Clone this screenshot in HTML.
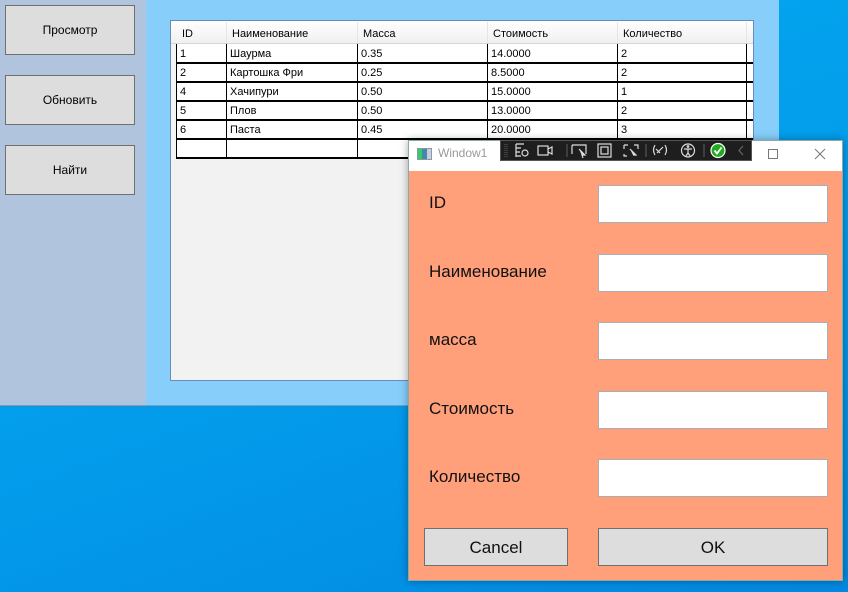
<!DOCTYPE html>
<html><head><meta charset="utf-8"><style>
*{margin:0;padding:0;box-sizing:border-box}
body{width:848px;height:592px;overflow:hidden;position:relative;font-family:"Liberation Sans",sans-serif;background:linear-gradient(160deg,#03aef2 0%,#0399ea 60%,#0288e0 100%)}
.a{position:absolute}
.btn{position:absolute;background:#dddddd;border:1px solid #707070;display:flex;align-items:center;justify-content:center;font-size:12px;color:#000}
.c{position:absolute;font-size:11px;color:#000;white-space:nowrap;line-height:19px;padding-left:3px;margin-top:1px}
.hl{position:absolute;height:2px;background:#000;left:176px;width:577px}
.vl{position:absolute;width:1px;background:#000}
.lbl{position:absolute;left:429px;font-size:17px;color:#111;margin-top:1px}
.tb{position:absolute;left:598px;width:230px;background:#fff;border:1px solid #abadb3}
.dbtn{position:absolute;background:#dddddd;border:1px solid #707070;display:flex;align-items:center;justify-content:center;font-size:17px;color:#111;padding-top:2px}
</style></head><body>
<div class="a" style="left:0;top:0;width:146px;height:406px;background:#b0c4de"></div>
<div class="a" style="left:146px;top:0;width:633px;height:406px;background:#87cefa"></div>
<div class="a" style="left:0;top:405px;width:779px;height:2px;background:#3a7fb8;opacity:.5"></div>
<div class="btn" style="left:5px;top:5px;width:130px;height:50px">Просмотр</div>
<div class="btn" style="left:5px;top:75px;width:130px;height:50px">Обновить</div>
<div class="btn" style="left:5px;top:145px;width:130px;height:50px">Найти</div>

<div class="a" style="left:170px;top:20px;width:584px;height:361px;background:#f2f2f2;border:1px solid #6a8cba"></div>
<div class="a" style="left:171px;top:21px;width:582px;height:23px;background:linear-gradient(#fff,#f0f0f0);border-bottom:1px solid #d5d5d5"></div>
<div class="a" style="left:176px;top:44px;width:577px;height:115px;background:#fff"></div>
<div class="a" style="left:171px;top:44px;width:5px;height:115px;background:#f4f4f4"></div>
<div class="c" style="left:179px;top:24px">ID</div>
<div class="c" style="left:229px;top:24px">Наименование</div>
<div class="c" style="left:360px;top:24px">Масса</div>
<div class="c" style="left:490px;top:24px">Стоимость</div>
<div class="c" style="left:620px;top:24px">Количество</div>
<div class="a" style="left:226px;top:22px;width:1px;height:21px;background:#e5e5e5"></div>
<div class="a" style="left:357px;top:22px;width:1px;height:21px;background:#e5e5e5"></div>
<div class="a" style="left:487px;top:22px;width:1px;height:21px;background:#e5e5e5"></div>
<div class="a" style="left:617px;top:22px;width:1px;height:21px;background:#e5e5e5"></div>
<div class="a" style="left:746px;top:22px;width:1px;height:21px;background:#e5e5e5"></div>

<div class="hl" style="top:62px"></div><div class="hl" style="top:81px"></div><div class="hl" style="top:100px"></div><div class="hl" style="top:119px"></div><div class="hl" style="top:138px"></div><div class="hl" style="top:157px;width:233px"></div>
<div class="vl" style="left:176px;top:44px;height:115px"></div>
<div class="vl" style="left:226px;top:44px;height:115px"></div>
<div class="vl" style="left:357px;top:44px;height:115px"></div>
<div class="vl" style="left:487px;top:44px;height:96px"></div>
<div class="vl" style="left:617px;top:44px;height:96px"></div>
<div class="vl" style="left:746px;top:44px;height:96px"></div>

<div class="c" style="left:177px;top:44px">1</div><div class="c" style="left:227px;top:44px">Шаурма</div><div class="c" style="left:358px;top:44px">0.35</div><div class="c" style="left:488px;top:44px">14.0000</div><div class="c" style="left:618px;top:44px">2</div>
<div class="c" style="left:177px;top:63px">2</div><div class="c" style="left:227px;top:63px">Картошка Фри</div><div class="c" style="left:358px;top:63px">0.25</div><div class="c" style="left:488px;top:63px">8.5000</div><div class="c" style="left:618px;top:63px">2</div>
<div class="c" style="left:177px;top:82px">4</div><div class="c" style="left:227px;top:82px">Хачипури</div><div class="c" style="left:358px;top:82px">0.50</div><div class="c" style="left:488px;top:82px">15.0000</div><div class="c" style="left:618px;top:82px">1</div>
<div class="c" style="left:177px;top:101px">5</div><div class="c" style="left:227px;top:101px">Плов</div><div class="c" style="left:358px;top:101px">0.50</div><div class="c" style="left:488px;top:101px">13.0000</div><div class="c" style="left:618px;top:101px">2</div>
<div class="c" style="left:177px;top:120px">6</div><div class="c" style="left:227px;top:120px">Паста</div><div class="c" style="left:358px;top:120px">0.45</div><div class="c" style="left:488px;top:120px">20.0000</div><div class="c" style="left:618px;top:120px">3</div>

<!-- dialog -->
<div class="a" style="left:408px;top:140px;width:435px;height:441px;background:#ffa07a;border:1px solid #8aa;box-shadow:0 0 8px rgba(0,0,0,.35)"></div>
<div class="a" style="left:409px;top:141px;width:433px;height:30px;background:#fff"></div>
<div class="a" style="left:417px;top:148px;width:15px;height:12px;border:1px solid #8899aa;background:linear-gradient(90deg,#3c6 0 30%,#48a 30% 70%,#ccd 70%)"></div>
<div class="a" style="left:438px;top:146px;font-size:12px;color:#999">Window1</div>
<div class="a" style="left:500px;top:140px;width:252px;height:21px;background:#1e1e1e;border:1px solid #555"></div>
<svg class="a" style="left:500px;top:140px" width="252" height="21" viewBox="0 0 252 21" fill="none" stroke="#ddd" stroke-width="1.2">
<path d="M5 4v13M7 4v13" stroke="#555" stroke-dasharray="1 1"/>
<path d="M16 4h8M16 8h5M16 12h4M16 16h5M16 4v13"/><circle cx="25" cy="13" r="3"/>
<rect x="38" y="6" width="10" height="9"/><path d="M48 9l4-2v7l-4-2"/>
<path d="M67 4v13" stroke="#555"/>
<path d="M72 5h14v9M72 5v9"/><path d="M79 9l6 6-3 0 1 3" fill="#ddd"/>
<rect x="98" y="4" width="13" height="13"/><rect x="101" y="7" width="7" height="7"/>
<path d="M124 5h4M134 5h4v4M124 5v4M124 14v2h3"/><path d="M130 9l6 6-3 0" fill="#ddd"/>
<path d="M146 4v13" stroke="#555"/>
<path d="M155 5q-3 5 0 10M165 5q3 5 0 10M157 13l6-6M156 9l4 4"/>
<circle cx="188" cy="10.5" r="6.5"/><path d="M184 9h8M188 9v4l-2 3M188 13l2 3"/><circle cx="188" cy="6.5" r=".8"/>
<path d="M204 4v13" stroke="#555"/>
<circle cx="218" cy="10.5" r="7" fill="#2a2" stroke="#fff"/><path d="M214.5 10.5l2.5 3 4.5-6" stroke="#fff" stroke-width="1.8"/>
<path d="M243 6l-4 4.5 4 4.5" stroke="#666"/>
</svg>
<div class="a" style="left:768px;top:149px;width:10px;height:10px;border:1px solid #777"></div>
<svg class="a" style="left:814px;top:148px" width="12" height="12"><path d="M1 1l10 10M11 1L1 11" stroke="#777" stroke-width="1"/></svg>

<div class="lbl" style="top:192px">ID</div>
<div class="lbl" style="top:261px">Наименование</div>
<div class="lbl" style="top:329px">масса</div>
<div class="lbl" style="top:398px">Стоимость</div>
<div class="lbl" style="top:466px">Количество</div>
<div class="tb" style="top:185px;height:38px"></div>
<div class="tb" style="top:254px;height:38px"></div>
<div class="tb" style="top:322px;height:38px"></div>
<div class="tb" style="top:391px;height:38px"></div>
<div class="tb" style="top:459px;height:38px"></div>
<div class="dbtn" style="left:424px;top:528px;width:144px;height:38px">Cancel</div>
<div class="dbtn" style="left:598px;top:528px;width:230px;height:38px">OK</div>
</body></html>
